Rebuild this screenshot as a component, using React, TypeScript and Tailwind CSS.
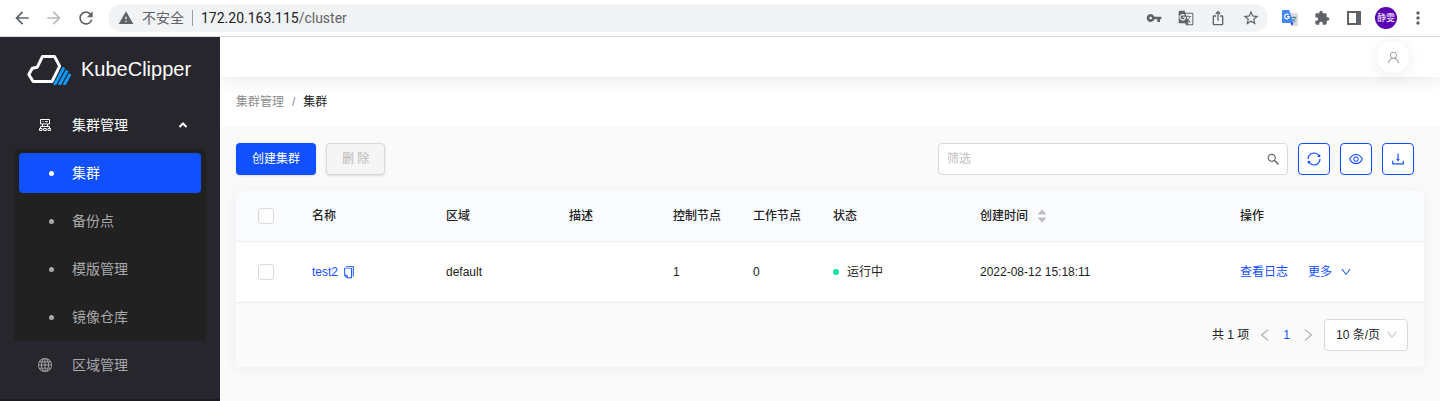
import React from 'react';
import {
  MdArrowBack,
  MdArrowForward,
  MdRefresh,
  MdWarning,
  MdVpnKey,
  MdGTranslate,
  MdIosShare,
  MdStarBorder,
  MdExtension,
  MdMoreVert,
} from 'react-icons/md';
import {
  AiOutlineSync,
  AiOutlineEye,
  AiOutlineDownload,
  AiOutlineUser,
  AiOutlineCopy,
  AiOutlineDown,
  AiOutlineLeft,
  AiOutlineRight,
  AiFillCaretUp,
  AiFillCaretDown,
} from 'react-icons/ai';
import { BsGlobe } from 'react-icons/bs';

function TranslateBadge() {
  return (
    <svg width="16" height="16" viewBox="0 0 16 16" aria-hidden="true">
      <path d="M6 3h9.2a.8.8 0 0 1 .8.8v11.4a.8.8 0 0 1-.8.8H10z" fill="#dadce0" />
      <path d="M9.5 7.5h5M12 6.2v1.3M13.6 7.5c-.4 2-1.800 3.500-3.400 4.500M10.600 8.800c.6 1.400 1.700 2.400 3 3.200" stroke="#4f7f90" strokeWidth="1" fill="none" />
      <path d="M8.500 13h3L9.800 16z" fill="#2a3fd0" />
      <path d="M.8 0h6.400l4.300 13H.8a.8.8 0 0 1-.8-.8V.8A.8.8 0 0 1 .8 0z" fill="#4285f4" />
      <path d="M6.600 4.900A2.300 2.300 0 1 0 7.200 6.700H5" stroke="#fff" strokeWidth="1.200" fill="none" />
    </svg>
  );
}

function Logo() {
  return (
    <svg width="46" height="32" viewBox="0 0 46 32" aria-hidden="true">
      <path d="M15.500 3.400h12l5.200 9.800-7.700 15.300H6.200L1.800 21.500l3.500-6.300 5-1z" fill="none" stroke="#fff" strokeWidth="3" strokeLinejoin="round" />
      <g stroke="#0f9bff" strokeWidth="2.900">
        <path d="M27.500 32l9.500-17.500" />
        <path d="M32.300 32l7.900-14.500" />
        <path d="M37.100 32l6-11" />
      </g>
    </svg>
  );
}

function ClusterIcon() {
  return (
    <svg width="14" height="14" viewBox="0 0 14 14" fill="none" stroke="currentColor" aria-hidden="true">
      <path d="M2.500 1.500h9v4.500h-9zM4.500 3.700h1M7 3.700h3M4.500 6v2.500M9.500 6v2.500M2.500 10V8.500h9V10" />
      <path d="M1.500 10.500h2.500v2H1.500zM5.700 10.500h2.600v2H5.700zM10 10.500h2.500v2H10z" />
    </svg>
  );
}

function SearchIcon() {
  return (
    <svg width="12" height="12" viewBox="0 0 12 12" fill="none" stroke="#444" aria-hidden="true">
      <circle cx="4.800" cy="4.800" r="3.600" />
      <path d="M7.400 7.400l4 4" strokeWidth="1.300" />
    </svg>
  );
}

function BrowserBar() {
  return (
    <div className="relative z-10 flex h-[37px] shrink-0 items-center border-b border-[#d6d8db] bg-white font-[Roboto,'Noto_Sans_CJK_SC',sans-serif] text-sm text-[#5f6368]">
      <div className="flex gap-3 pl-3">
        <button aria-label="后退"><MdArrowBack size={20} /></button>
        <button aria-label="前进" className="text-[#b8babd]"><MdArrowForward size={20} /></button>
        <button aria-label="刷新"><MdRefresh size={20} /></button>
      </div>
      <div className="ml-3 flex h-7 flex-1 items-center rounded-full bg-[#f1f3f4] pr-2 pl-2.5">
        <MdWarning size={16} />
        <span className="ml-2">不安全</span>
        <span className="mx-2 h-4 w-px bg-[#9aa0a6]" />
        <span className="flex-1">
          <span className="text-[#202124]">172.20.163.115</span>/cluster
        </span>
        <div className="flex items-center gap-4">
          <button aria-label="密码"><MdVpnKey size={16} /></button>
          <button aria-label="翻译"><MdGTranslate size={16} /></button>
          <button aria-label="分享"><MdIosShare size={16} /></button>
          <button aria-label="收藏"><MdStarBorder size={18} /></button>
        </div>
      </div>
      <div className="flex items-center px-1.5 *:flex *:w-8 *:items-center *:justify-center">
        <button aria-label="Google 翻译"><TranslateBadge /></button>
        <button aria-label="扩展程序"><MdExtension size={16} /></button>
        <button aria-label="侧边栏">
          <span className="h-3.5 w-3.5 border-2 border-r-[5px] border-[#5f6368]" />
        </button>
        <button>
          <span className="flex h-[22px] w-[22px] items-center justify-center rounded-full bg-[#5a00b0] text-[9px] text-white">静雯</span>
        </button>
        <button aria-label="更多"><MdMoreVert size={20} /></button>
      </div>
    </div>
  );
}

const subItems = ['集群', '备份点', '模版管理', '镜像仓库'];

function Sidebar() {
  return (
    <aside className="relative z-10 w-[220px] shrink-0 border-b-2 border-[#1d1b22] bg-[#27262d] text-sm text-[#a9a9ab]">
      <div className="flex h-16 items-center gap-2 pl-[27px] text-xl text-white">
        <Logo />
        <span>KubeClipper</span>
      </div>
      <nav className="pt-1">
        <button className="flex h-10 w-full items-center pr-8 pl-[38px] text-white">
          <ClusterIcon />
          <span className="ml-5 flex-1 text-left">集群管理</span>
          <svg width="10" height="10" viewBox="0 0 10 10" fill="none" stroke="#fff" strokeWidth="2" aria-hidden="true">
            <path d="M1.500 7L5 3.500 8.500 7" />
          </svg>
        </button>
        <ul className="mx-3.5 my-1 rounded bg-[#212121] px-[5px] py-1">
          {subItems.map((item, i) => (
            <li key={item} className="mb-2 last:mb-0">
              <a
                href="#"
                className={`flex h-10 items-center gap-[18px] rounded pl-[30px] ${i === 0 ? 'bg-[#1150ff] text-white' : ''}`}
              >
                <span className="h-[5px] w-[5px] rounded-full bg-current" />
                {item}
              </a>
            </li>
          ))}
        </ul>
        <a href="#" className="flex h-10 items-center gap-5 pl-[38px]">
          <BsGlobe size={14} />
          区域管理
        </a>
      </nav>
    </aside>
  );
}

const tools = [
  { label: '刷新', Icon: AiOutlineSync },
  { label: '显示列', Icon: AiOutlineEye },
  { label: '下载', Icon: AiOutlineDownload },
];

function Toolbar() {
  return (
    <div className="flex items-center pr-2.5">
      <button className="h-8 rounded bg-[#1150ff] px-4 text-white shadow-sm">创建集群</button>
      <button disabled className="ml-2.5 h-8 rounded border border-[#d9d9d9] bg-[#f5f5f5] px-[15px] text-[#b9b9b9] shadow-sm">
        删 除
      </button>
      <label className="ml-auto flex h-8 w-[350px] items-center rounded border border-[#d9d9d9] bg-white pr-2 pl-2">
        <input aria-label="筛选" placeholder="筛选" className="min-w-0 flex-1 outline-none placeholder:text-[#bfbfbf]" />
        <SearchIcon />
      </label>
      <div className="ml-2.5 flex gap-2.5 text-[#1150ff]">
        {tools.map(({ label, Icon }) => (
          <button key={label} aria-label={label} className="flex h-8 w-8 items-center justify-center rounded border border-[#1150ff] bg-white">
            <Icon size={16} />
          </button>
        ))}
      </div>
    </div>
  );
}

function Tick({ label }: { label: string }) {
  return (
    <input
      type="checkbox"
      aria-label={label}
      className="block h-4 w-4 appearance-none rounded-[3px] border border-[#d9d9d9] bg-white"
    />
  );
}

function ClusterTable() {
  return (
    <table className="w-full table-fixed text-left">
      <colgroup>
        <col className="w-[60px]" />
        <col className="w-[134px]" />
        <col className="w-[123px]" />
        <col className="w-[104px]" />
        <col className="w-[80px]" />
        <col className="w-[80px]" />
        <col className="w-[147px]" />
        <col className="w-[260px]" />
        <col className="w-[200px]" />
      </colgroup>
      <thead>
        <tr className="h-[50px] border-b border-[#ebeef0] bg-[#fafbfe] *:px-4 *:font-medium">
          <th><div className="pl-1.5"><Tick label="全选" /></div></th>
          <th>名称</th>
          <th>区域</th>
          <th>描述</th>
          <th>控制节点</th>
          <th>工作节点</th>
          <th>状态</th>
          <th>
            <span className="flex items-center gap-2">
              创建时间
              <span className="flex flex-col text-[#bfbfbf]">
                <AiFillCaretUp size={12} className="-mb-1" />
                <AiFillCaretDown size={12} />
              </span>
            </span>
          </th>
          <th>操作</th>
        </tr>
      </thead>
      <tbody>
        <tr className="h-[61px] border-b border-[#ebebeb] bg-white *:px-4">
          <td><div className="pl-1.5"><Tick label="选择 test2" /></div></td>
          <td>
            <span className="flex items-center gap-1 text-[#1150ff]">
              <a href="#">test2</a>
              <button aria-label="复制"><AiOutlineCopy size={14} /></button>
            </span>
          </td>
          <td>default</td>
          <td />
          <td>1</td>
          <td>0</td>
          <td>
            <span className="flex items-center gap-2">
              <span className="h-1.5 w-1.5 rounded-full bg-[#05e89a]" />
              运行中
            </span>
          </td>
          <td>2022-08-12 15:18:11</td>
          <td>
            <span className="flex items-center gap-5 text-[#1150ff]">
              <a href="#">查看日志</a>
              <button className="flex items-center gap-2">
                更多
                <AiOutlineDown size={12} />
              </button>
            </span>
          </td>
        </tr>
      </tbody>
    </table>
  );
}

function Pagination() {
  return (
    <div className="flex h-16 items-center justify-end gap-2 pr-4">
      <span>共 1 项</span>
      <button aria-label="上一页" className="text-[#b5b5b5]"><AiOutlineLeft size={16} /></button>
      <button className="px-0.5 text-[#1150ff]">1</button>
      <button aria-label="下一页" className="text-[#b5b5b5]"><AiOutlineRight size={16} /></button>
      <div className="grid items-center">
        <select aria-label="每页条数" className="col-start-1 row-start-1 h-8 w-[84px] appearance-none rounded border border-[#d9d9d9] bg-white pl-[11px]">
          <option>10 条/页</option>
        </select>
        <AiOutlineDown size={12} className="pointer-events-none col-start-1 row-start-1 mr-2.5 justify-self-end text-[#bfbfbf]" />
      </div>
    </div>
  );
}

export default function App() {
  return (
    <div className="flex min-h-screen flex-col font-['Liberation_Sans','Noto_Sans_CJK_SC',sans-serif] text-[#222]">
      <BrowserBar />
      <div className="flex flex-1">
        <Sidebar />
        <div className="min-w-0 flex-1 bg-[#fafafa] text-xs">
          <header className="relative flex h-10 items-center justify-end bg-white pr-[31px] shadow-[0_2px_20px_rgba(0,0,0,0.1)]">
            <button aria-label="用户" className="flex h-8 w-8 items-center justify-center rounded-full bg-white text-[#a6a6a6] shadow-[0_2px_16px_rgba(0,0,0,0.08)]">
              <AiOutlineUser size={15} />
            </button>
          </header>
          <nav className="flex h-[50px] items-center gap-2 bg-white px-4 text-[#8c8c8c]">
            <a href="#">集群管理</a>
            <span>/</span>
            <span className="text-[#222]">集群</span>
          </nav>
          <main className="p-4">
            <Toolbar />
            <section className="mt-4 overflow-hidden rounded bg-[#fafafa] shadow-[0_2px_14px_rgba(0,0,0,0.06)]">
              <ClusterTable />
              <Pagination />
            </section>
          </main>
        </div>
      </div>
    </div>
  );
}
